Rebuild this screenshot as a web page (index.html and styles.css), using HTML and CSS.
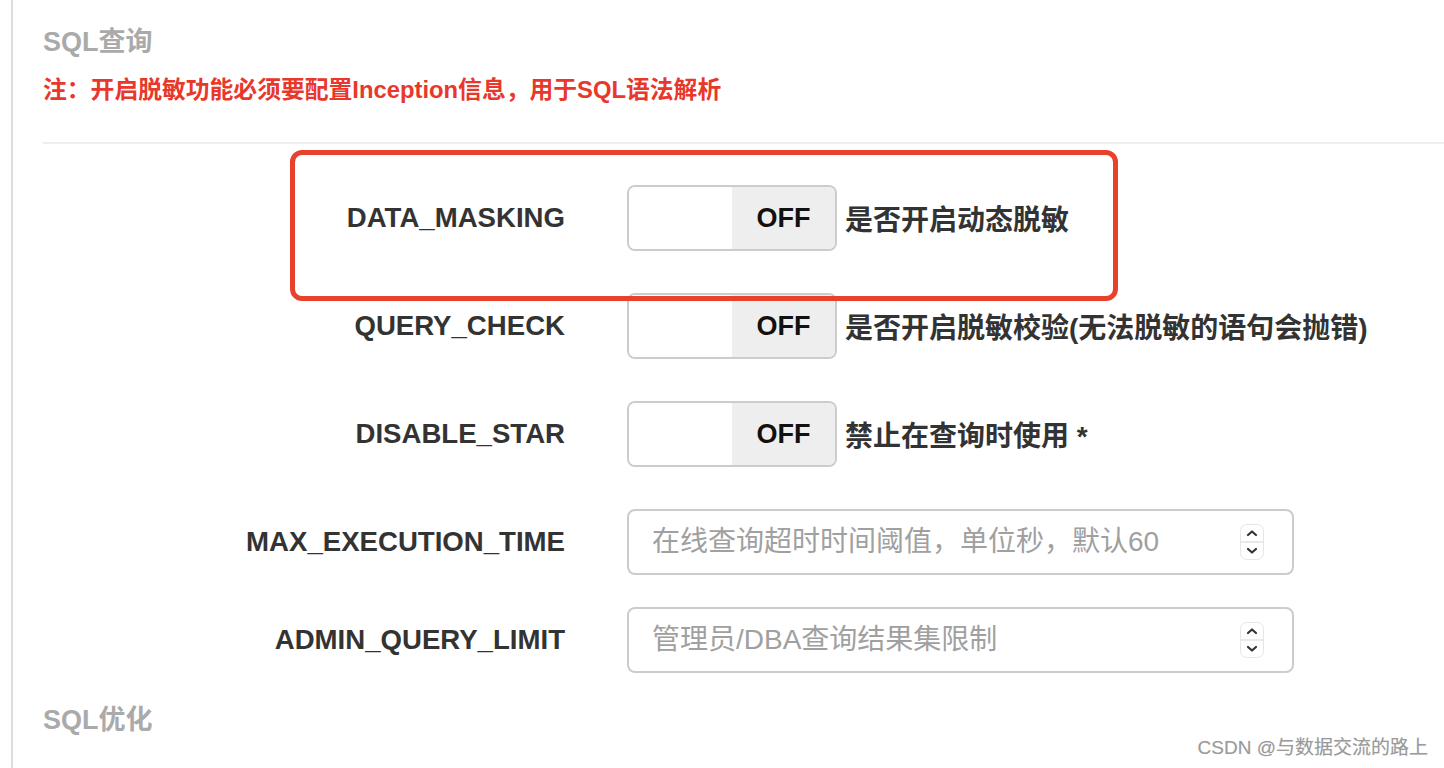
FILE: index.html
```html
<!DOCTYPE html>
<html lang="zh-CN">
<head>
<meta charset="utf-8">
<title>SQL查询设置</title>
<link rel="stylesheet" href="styles.css">
</head>
<body>
<div class="page">
  <section class="panel">
    <h3 class="section-title">SQL查询</h3>
    <p class="note">注：开启脱敏功能必须要配置Inception信息，用于SQL语法解析</p>
    <hr class="divider">
    <div class="form">
      <div class="row">
        <label class="label">DATA_MASKING</label>
        <div class="control">
          <div class="switch"><span class="switch-on"></span><span class="switch-off">OFF</span></div>
          <span class="help">是否开启动态脱敏</span>
        </div>
      </div>
      <div class="row">
        <label class="label">QUERY_CHECK</label>
        <div class="control">
          <div class="switch"><span class="switch-on"></span><span class="switch-off">OFF</span></div>
          <span class="help">是否开启脱敏校验(无法脱敏的语句会抛错)</span>
        </div>
      </div>
      <div class="row">
        <label class="label">DISABLE_STAR</label>
        <div class="control">
          <div class="switch"><span class="switch-on"></span><span class="switch-off">OFF</span></div>
          <span class="help">禁止在查询时使用 *</span>
        </div>
      </div>
      <div class="row row-input">
        <label class="label">MAX_EXECUTION_TIME</label>
        <div class="control">
          <div class="number-field">
            <input class="number-input" type="text" placeholder="在线查询超时时间阈值，单位秒，默认60">
            <span class="spinner">
              <svg width="24" height="36" viewBox="0 0 24 36">
                <rect x="0.5" y="0.5" width="23" height="35" rx="6" fill="#fff" stroke="#e6e6e6"/>
                <line x1="1" y1="18" x2="23" y2="18" stroke="#e2e2e2" stroke-width="1.5"/>
                <path d="M8 11 L12 7.5 L16 11" fill="none" stroke="#333" stroke-width="2.2" stroke-linecap="round" stroke-linejoin="round"/>
                <path d="M8 25 L12 28.5 L16 25" fill="none" stroke="#333" stroke-width="2.2" stroke-linecap="round" stroke-linejoin="round"/>
              </svg>
            </span>
          </div>
        </div>
      </div>
      <div class="row row-last">
        <label class="label">ADMIN_QUERY_LIMIT</label>
        <div class="control">
          <div class="number-field">
            <input class="number-input" type="text" placeholder="管理员/DBA查询结果集限制">
            <span class="spinner">
              <svg width="24" height="36" viewBox="0 0 24 36">
                <rect x="0.5" y="0.5" width="23" height="35" rx="6" fill="#fff" stroke="#e6e6e6"/>
                <line x1="1" y1="18" x2="23" y2="18" stroke="#e2e2e2" stroke-width="1.5"/>
                <path d="M8 11 L12 7.5 L16 11" fill="none" stroke="#333" stroke-width="2.2" stroke-linecap="round" stroke-linejoin="round"/>
                <path d="M8 25 L12 28.5 L16 25" fill="none" stroke="#333" stroke-width="2.2" stroke-linecap="round" stroke-linejoin="round"/>
              </svg>
            </span>
          </div>
        </div>
      </div>
    </div>
    <h3 class="section-title section-next">SQL优化</h3>
  </section>
  <div class="highlight"></div>
  <div class="watermark">CSDN @与数据交流的路上</div>
</div>
</body>
</html>
```

FILE: styles.css
```css
* {
  box-sizing: border-box;
}

html, body {
  margin: 0;
  padding: 0;
  background: #fff;
}

body {
  font-family: "Liberation Sans", "Noto Sans CJK SC", sans-serif;
  color: #333;
  overflow: hidden;
}

.page {
  position: relative;
  width: 1444px;
  height: 768px;
  overflow: hidden;
}

.panel {
  margin-left: 11px;
  border-left: 2px solid #dcdcdc;
  min-height: 768px;
  padding: 27px 0 0 30px;
}

.section-title {
  margin: 0;
  font-size: 27px;
  line-height: 30px;
  font-weight: bold;
  color: #aaaaaa;
}

.section-next {
  margin-top: 32px;
}

.note {
  margin: 18px 0 0;
  font-size: 23.8px;
  line-height: 30px;
  font-weight: bold;
  color: #e8382b;
}

.divider {
  margin: 37px 0 0;
  border: 0;
  height: 2px;
  background: #eeeeee;
}

.form {
  margin-top: 41px;
  display: flex;
  flex-direction: column;
}

.row {
  display: grid;
  grid-template-columns: 522px auto;
  column-gap: 62px;
  align-items: center;
  height: 66px;
  margin-bottom: 42px;
}

.row-input {
  margin-bottom: 32px;
}

.row-last {
  margin-bottom: 0;
}

.label {
  text-align: right;
  font-size: 27.6px;
  font-weight: bold;
  color: #333;
  white-space: nowrap;
}

.control {
  display: flex;
  align-items: center;
}

.switch {
  display: flex;
  width: 210px;
  height: 66px;
  border: 2px solid #cccccc;
  border-radius: 8px;
  overflow: hidden;
  flex-shrink: 0;
}

.switch-on {
  width: 103px;
  background: #fff;
}

.switch-off {
  width: 103px;
  background: #eeeeee;
  display: flex;
  align-items: center;
  justify-content: center;
  font-size: 27px;
  font-weight: bold;
  color: #111;
}

.help {
  margin-left: 8px;
  font-size: 28px;
  font-weight: bold;
  color: #333;
  white-space: nowrap;
}

.number-field {
  display: flex;
  align-items: center;
  width: 667px;
  height: 66px;
  border: 2px solid #cccccc;
  border-radius: 8px;
  padding: 0 28px 0 23px;
  background: #fff;
}

.number-input {
  flex: 1;
  border: 0;
  outline: none;
  padding: 0;
  font-family: "Liberation Sans", "Noto Sans CJK SC", sans-serif;
  font-size: 28px;
  color: #333;
  background: transparent;
}

.number-input::placeholder {
  color: #a0a0a0;
}

.spinner {
  display: flex;
  width: 24px;
  height: 36px;
}

.highlight {
  position: absolute;
  left: 290px;
  top: 150px;
  width: 828px;
  height: 151px;
  border: 5px solid #e8412c;
  border-radius: 12px;
  pointer-events: none;
}

.watermark {
  position: absolute;
  right: 16px;
  bottom: 8px;
  font-size: 19px;
  line-height: 24px;
  color: #9a9a9a;
  text-shadow: 0 0 1px #ddd;
}
```
